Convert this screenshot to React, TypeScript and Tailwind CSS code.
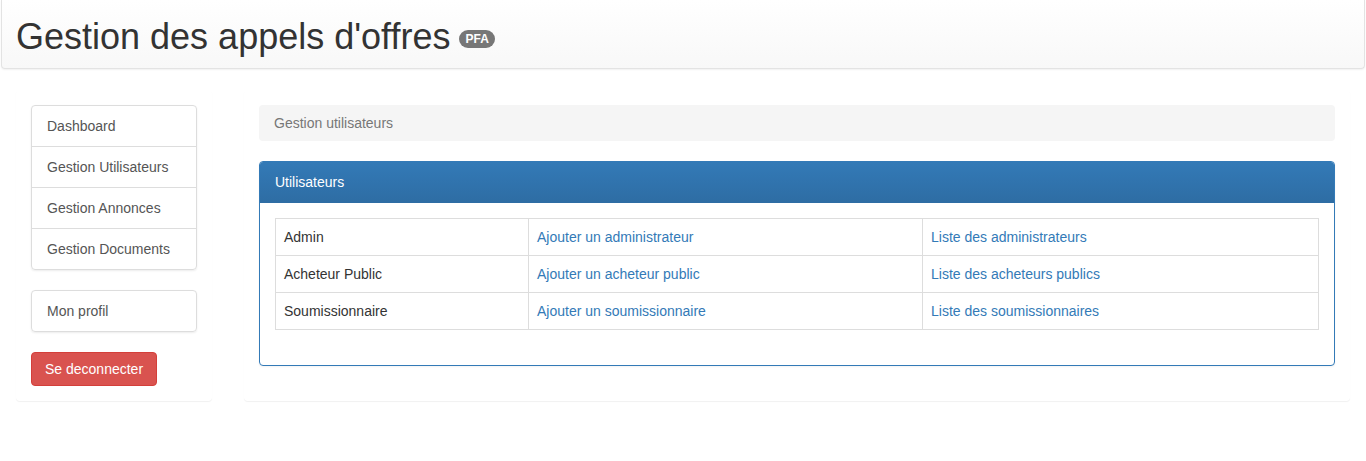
import React from "react";

const menu = ["Dashboard", "Gestion Utilisateurs", "Gestion Annonces", "Gestion Documents"];

const rows = [
    { role: "Admin", add: "Ajouter un administrateur", list: "Liste des administrateurs" },
    { role: "Acheteur Public", add: "Ajouter un acheteur public", list: "Liste des acheteurs publics" },
    { role: "Soumissionnaire", add: "Ajouter un soumissionnaire", list: "Liste des soumissionnaires" },
];

const App = () => {
    return (
        <div className="min-h-screen bg-white text-[14px] leading-[20px] text-[#333] font-['Liberation_Sans',Arial,sans-serif]">
            {/* top bar */}
            <header className="mx-px h-[69px] rounded-b-[4px] border border-t-0 border-[#e3e3e3] bg-gradient-to-b from-white to-[#f8f8f8] shadow-[0_1px_2px_rgba(0,0,0,0.06)] pl-[14px] pt-[17px]">
                <h1 className="flex items-center text-[36px] leading-[40px] font-normal text-[#333]">
                    Gestion des appels d'offres
                    <span className="ml-[9px] mt-[4px] inline-block rounded-[10px] bg-[#777] px-[6px] py-[3px] text-[12px] leading-[12px] font-bold text-white">PFA</span>
                </h1>
            </header>

            <div className="mt-[21px] flex gap-[32px] px-[16px]">
                {/* sidebar */}
                <aside className="w-[196px] shrink-0 rounded-[4px] bg-white p-[15px] shadow-[0_1px_1px_rgba(0,0,0,0.06)]">
                    <ul className="rounded-[4px] border border-[#ddd] shadow-[0_1px_2px_rgba(0,0,0,0.075)]">
                        {menu.map((item, i) => (
                            <li key={i} className={"px-[15px] py-[10px] text-[#555] " + (i > 0 ? "border-t border-[#ddd]" : "")}>{item}</li>
                        ))}
                    </ul>
                    <ul className="mt-[20px] rounded-[4px] border border-[#ddd] shadow-[0_1px_2px_rgba(0,0,0,0.075)]">
                        <li className="px-[15px] py-[10px] text-[#555]">Mon profil</li>
                    </ul>
                    <button className="mt-[20px] rounded-[4px] border border-[#d43f3a] bg-[#d9534f] px-[13px] py-[6px] text-white">Se deconnecter</button>
                </aside>

                {/* main */}
                <main className="flex-1 rounded-[4px] bg-white p-[15px] shadow-[0_1px_1px_rgba(0,0,0,0.06)]">
                    <div className="rounded-[4px] bg-[#f5f5f5] px-[15px] py-[8px] text-[#777]">Gestion utilisateurs</div>

                    <div className="mt-[20px] mb-[20px] rounded-[4px] border border-[#337ab7] shadow-[0_1px_2px_rgba(0,0,0,0.05)]">
                        <div className="rounded-t-[3px] border-b border-[#2e6da4] bg-gradient-to-b from-[#337ab7] to-[#2e6da4] px-[15px] py-[10px] text-white">
                            Utilisateurs
                        </div>
                        <div className="p-[15px]">
                            <table className="mb-[20px] w-full border-collapse border border-[#ddd]">
                                <tbody>
                                    {rows.map((r, i) => (
                                        <tr key={i}>
                                            <td className="w-[253px] border border-[#ddd] p-[8px]">{r.role}</td>
                                            <td className="w-[394px] border border-[#ddd] p-[8px]"><a className="text-[#337ab7]">{r.add}</a></td>
                                            <td className="border border-[#ddd] p-[8px]"><a className="text-[#337ab7]">{r.list}</a></td>
                                        </tr>
                                    ))}
                                </tbody>
                            </table>
                        </div>
                    </div>
                </main>
            </div>
        </div>
    );
};

export default App;
